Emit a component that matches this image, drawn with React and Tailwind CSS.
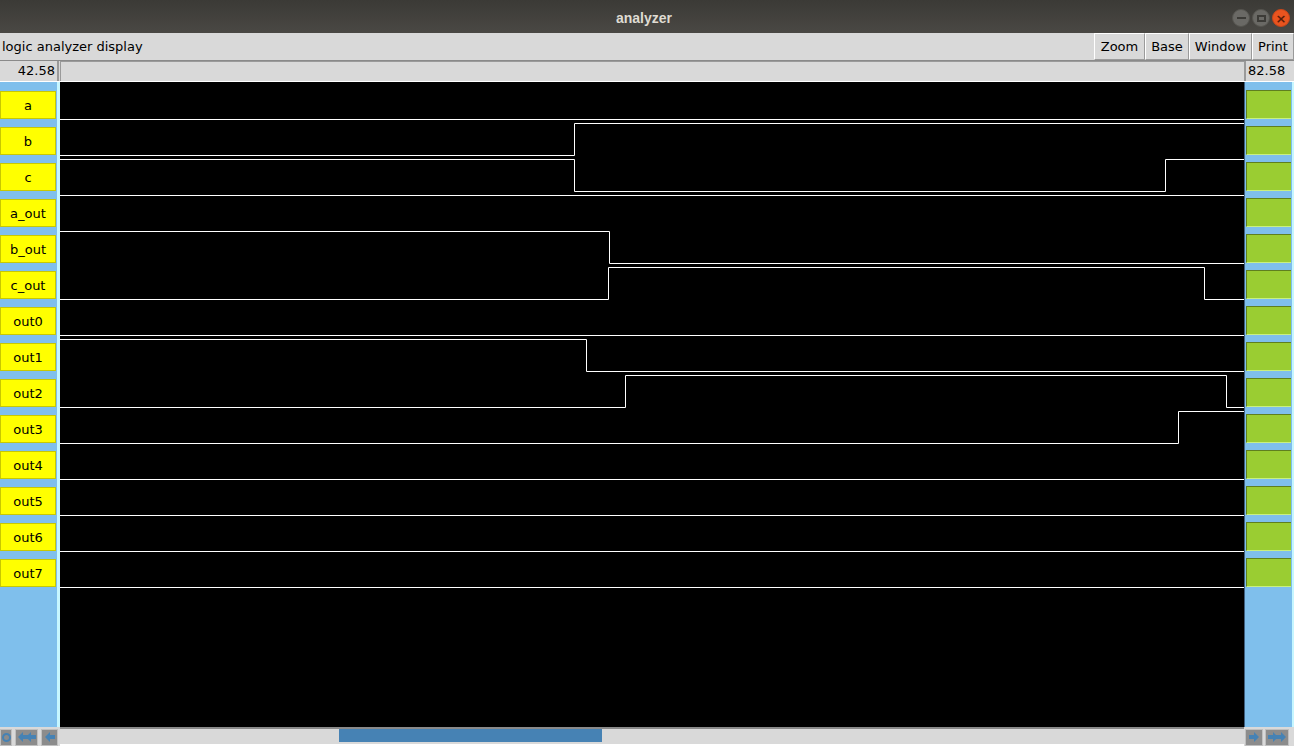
import React from 'react';

const signals = ['a', 'b', 'c', 'a_out', 'b_out', 'c_out', 'out0', 'out1', 'out2', 'out3', 'out4', 'out5', 'out6', 'out7'];

// level segments: [startX, value] with absolute screen x, canvas runs 60..1244
const waves = [
  [[60, 0]],
  [[60, 0], [574, 1]],
  [[60, 1], [574, 0], [1165, 1]],
  [[60, 1]],
  [[60, 1], [609, 0]],
  [[60, 0], [608, 1], [1204, 0]],
  [[60, 0]],
  [[60, 1], [586, 0]],
  [[60, 0], [625, 1], [1226, 0]],
  [[60, 0], [1178, 1]],
  [[60, 0]],
  [[60, 0]],
  [[60, 0]],
  [[60, 0]],
];

const menuButtons = [
  { label: 'Zoom', w: 'w-[51px]' },
  { label: 'Base', w: 'w-[44px]' },
  { label: 'Window', w: 'w-[63px]' },
  { label: 'Print', w: 'w-[42px]' },
];

function wavePath(segs, i) {
  const hi = 5 + 36 * i + 0.5;
  const lo = 37 + 36 * i + 0.5;
  let d = '';
  segs.forEach(([x, v], k) => {
    const y = v ? hi : lo;
    const sx = x - 60 + 0.5;
    if (k === 0) d += `M0 ${y}`;
    else d += ` L${sx} ${segs[k - 1][1] ? hi : lo} L${sx} ${y}`;
  });
  d += ` L1184 ${segs[segs.length - 1][1] ? hi : lo}`;
  return d;
}

function Arrow({ double, dir }) {
  const w = double ? 20 : 12;
  return (
    <svg width={w} height="12" viewBox={`0 0 ${w} 12`}>
      <g transform={dir === 'right' ? `scale(-1,1) translate(-${w},0)` : ''} fill="#4682b4">
        <polygon points="1,6 6,1 6,4 11,4 11,8 6,8 6,11" />
        {double && <polygon points="9,6 14,1 14,4 19,4 19,8 14,8 14,11" />}
      </g>
    </svg>
  );
}

export default function App() {
  return (
    <div className="w-[1294px] h-[746px] overflow-hidden flex flex-col bg-[#d9d9d9]" style={{ fontFamily: '"DejaVu Sans", sans-serif' }}>
      {/* title bar */}
      <div className="h-[33px] shrink-0 relative flex items-center justify-center pt-[3px] pr-[6px] bg-gradient-to-b from-[#3b3a36] to-[#4a4844]">
        <span className="text-[14px] font-bold text-[#dfdbd2]" style={{ fontFamily: '"Liberation Sans", sans-serif' }}>analyzer</span>
        <div className="absolute right-[4px] top-[9px] flex gap-[2px]">
          <div className="w-[18px] h-[18px] rounded-full bg-[#6a6965] border border-[#55544f] flex items-center justify-center">
            <div className="w-[9px] h-[2px] bg-[#3c3b37]" />
          </div>
          <div className="w-[18px] h-[18px] rounded-full bg-[#6a6965] border border-[#55544f] flex items-center justify-center">
            <div className="w-[9px] h-[7px] border-2 border-[#3c3b37]" />
          </div>
          <div className="w-[18px] h-[18px] rounded-full bg-[#e9541f] border border-[#c9461a] flex items-center justify-center text-[#5a1c08] text-[13px] leading-none font-bold">×</div>
        </div>
      </div>

      {/* menu bar */}
      <div className="h-[27px] shrink-0 flex items-center bg-[#d9d9d9] text-[13px] text-black">
        <span className="pl-[2px]">logic analyzer display</span>
        <div className="ml-auto flex h-full">
          {menuButtons.map((b) => (
            <div key={b.label} className={`${b.w} h-full flex items-center justify-center border-l border-t border-white border-r border-r-[#9a9a9a] border-b border-b-[#9a9a9a]`}>
              {b.label}
            </div>
          ))}
        </div>
      </div>

      {/* value row */}
      <div className="h-[22px] shrink-0 flex border-t border-[#8a8a8a] border-b border-b-white text-[13px] text-black">
        <div className="w-[59px] flex items-center justify-end pr-[2px] border-r-2 border-[#9a9a9a]">42.58</div>
        <div className="w-[1px]" />
        <div className="flex-1 border-l border-t border-[#9a9a9a]" />
        <div className="w-[50px] flex items-center pl-[2px] border-l-2 border-[#9a9a9a]">82.58</div>
      </div>

      {/* main */}
      <div className="h-[645px] shrink-0 flex">
        <div className="w-[60px] bg-[#7fbfec] border-r-[3px] border-[#c6f6ff] pt-[1px]">
          {signals.map((s) => (
            <div key={s} className="h-[36px] pt-[8px]">
              <div className="h-[28px] w-[56px] bg-[#ffff00] border border-[#c8c800] flex items-center justify-center pt-[1px] text-[13px] text-black">
                {s}
              </div>
            </div>
          ))}
        </div>
        <div className="flex-1 bg-black">
          <svg width="1184" height="645" className="block">
            {waves.map((w, i) => (
              <path key={i} d={wavePath(w, i)} stroke="white" strokeWidth="1" fill="none" />
            ))}
          </svg>
        </div>
        <div className="w-[50px] bg-[#7fbfec] border-l border-[#3f5f7f] border-r-[2px] border-r-[#c6f6ff] pt-[1px]">
          {signals.map((s) => (
            <div key={s} className="h-[36px] pt-[7px] pl-[1px]">
              <div className="h-[29px] w-[45px] bg-[#9acd32] border-t border-l border-[#5f7f1f] border-b border-b-[#c8f080]" />
            </div>
          ))}
        </div>
      </div>

      {/* bottom bar */}
      <div className="flex-1 flex items-center bg-[#d9d9d9]">
        <div className="w-[60px] flex items-center gap-[3px] h-full pt-[1px]">
          <div className="w-[12px] h-[17px] bg-[#8c8c8c] border border-[#c0c0c0] flex items-center justify-center">
            <div className="w-[9px] h-[9px] rounded-full border-2 border-[#4682b4]" />
          </div>
          <div className="w-[23px] h-[17px] bg-[#8c8c8c] border border-[#c0c0c0] flex items-center justify-center">
            <Arrow double dir="left" />
          </div>
          <div className="w-[17px] h-[17px] bg-[#8c8c8c] border border-[#c0c0c0] flex items-center justify-center">
            <Arrow dir="left" />
          </div>
        </div>
        <div className="w-[1184px] h-full border-t-2 border-[#8a8a8a] border-b-2 border-b-white pl-[279px]">
          <div className="w-[263px] h-[13px] bg-[#4682b4]" />
        </div>
        <div className="flex items-center gap-[2px] h-full pl-[1px] pt-[1px]">
          <div className="w-[18px] h-[17px] bg-[#8c8c8c] border border-[#c0c0c0] flex items-center justify-center">
            <Arrow dir="right" />
          </div>
          <div className="w-[24px] h-[17px] bg-[#8c8c8c] border border-[#c0c0c0] flex items-center justify-center">
            <Arrow double dir="right" />
          </div>
        </div>
      </div>
    </div>
  );
}
